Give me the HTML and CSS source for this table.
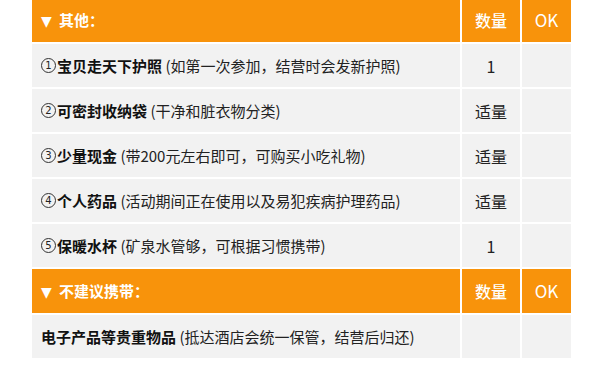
FILE: index.html
```html
<!DOCTYPE html>
<html lang="zh-CN">
<head>
<meta charset="utf-8">
<link rel="stylesheet" href="styles.css">
</head>
<body>
<table class="list">
  <colgroup>
    <col class="c-item">
    <col class="c-qty">
    <col class="c-ok">
  </colgroup>
  <tr class="head">
    <td class="item"><span class="tri">▼</span>其他：</td>
    <td class="qty">数量</td>
    <td class="ok">OK</td>
  </tr>
  <tr>
    <td class="item"><span class="num">1</span><b>宝贝走天下护照</b> (如第一次参加，结营时会发新护照)</td>
    <td class="qty">1</td>
    <td class="ok"></td>
  </tr>
  <tr>
    <td class="item"><span class="num">2</span><b>可密封收纳袋</b> (干净和脏衣物分类)</td>
    <td class="qty">适量</td>
    <td class="ok"></td>
  </tr>
  <tr>
    <td class="item"><span class="num">3</span><b>少量现金</b> (带200元左右即可，可购买小吃礼物)</td>
    <td class="qty">适量</td>
    <td class="ok"></td>
  </tr>
  <tr>
    <td class="item"><span class="num">4</span><b>个人药品</b> (活动期间正在使用以及易犯疾病护理药品)</td>
    <td class="qty">适量</td>
    <td class="ok"></td>
  </tr>
  <tr>
    <td class="item"><span class="num">5</span><b>保暖水杯</b> (矿泉水管够，可根据习惯携带)</td>
    <td class="qty">1</td>
    <td class="ok"></td>
  </tr>
  <tr class="head">
    <td class="item"><span class="tri">▼</span>不建议携带：</td>
    <td class="qty">数量</td>
    <td class="ok">OK</td>
  </tr>
  <tr>
    <td class="item"><b>电子产品等贵重物品</b> (抵达酒店会统一保管，结营后归还)</td>
    <td class="qty"></td>
    <td class="ok"></td>
  </tr>
</table>
</body>
</html>
```
FILE: styles.css
```css
html, body {
  margin: 0;
  padding: 0;
  background: #ffffff;
}
body {
  font-family: "Noto Sans CJK SC", "Noto Sans", sans-serif;
  font-size: 15px;
  color: #222222;
}
.list {
  border-collapse: separate;
  border-spacing: 2px;
  table-layout: fixed;
  width: 543px;
  margin: -4px 0 0 30px;
}
.c-item { width: 428px; }
.c-qty { width: 58px; }
.c-ok { width: 49px; }
.list td {
  height: 43px;
  padding: 0;
  background: #f2f2f2;
  line-height: 20px;
  vertical-align: middle;
  white-space: nowrap;
}
.list .item {
  padding-left: 9px;
  text-align: left;
}
.list .qty,
.list .ok {
  text-align: center;
  font-size: 16px;
}
.list b {
  font-weight: 700;
  color: #111;
}
.num {
  display: inline-block;
  box-sizing: border-box;
  width: 15px;
  height: 15px;
  margin-right: 1px;
  border: 1px solid #333;
  border-radius: 50%;
  font-family: "DejaVu Sans", sans-serif;
  font-size: 10px;
  line-height: 13px;
  text-align: center;
  vertical-align: middle;
  position: relative;
  top: -2px;
  color: #222;
}
.head td {
  height: 44px;
  background: #f8930b;
  color: #ffffff;
}
.head .item {
  font-weight: 700;
}
.head .qty,
.head .ok {
  font-weight: 500;
  font-size: 16px;
}
.head .ok {
  font-size: 17px;
  font-weight: 400;
}
.tri {
  display: inline-block;
  width: 18px;
  font-family: "DejaVu Sans", sans-serif;
  font-size: 14px;
  text-align: left;
}
```
